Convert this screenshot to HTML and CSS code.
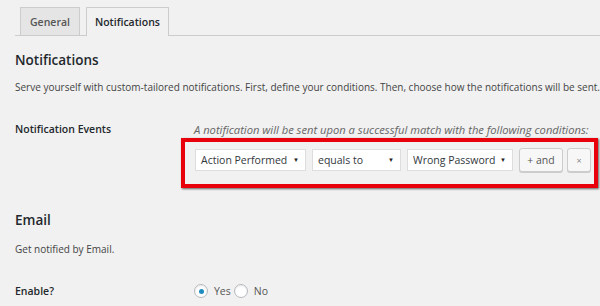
FILE: index.html
```html
<!DOCTYPE html>
<html>
<head>
	<meta charset="utf-8">
	<title>Notifications</title>
	<link rel="stylesheet" href="styles.css">
</head>
<body>
	<div class="wrap">
		<!-- tabs -->
		<nav class="tabs">
			<a class="tab">General</a>
			<a class="tab active">Notifications</a>
		</nav>

		<h2>Notifications</h2>
		<p class="desc">Serve yourself with custom-tailored notifications. First, define your conditions. Then, choose how the notifications will be sent.</p>

		<div class="row events">
			<div class="label">Notification Events</div>
			<div class="field">
				<p class="hint">A notification will be sent upon a successful match with the following conditions:</p>
				<div class="conditions">
					<div class="select w1">Action Performed <span class="arrow">&#9660;</span></div>
					<div class="select w2">equals to <span class="arrow">&#9660;</span></div>
					<div class="select w3">Wrong Password <span class="arrow">&#9660;</span></div>
					<button class="btn and">+ and</button>
					<button class="btn del">&times;</button>
				</div>
			</div>
		</div>

		<h2 class="email">Email</h2>
		<p class="desc small">Get notified by Email.</p>

		<div class="row enable">
			<div class="label">Enable?</div>
			<div class="field radios">
				<span class="radio checked"></span><span class="opt">Yes</span>
				<span class="radio"></span><span class="opt">No</span>
			</div>
		</div>
	</div>
</body>
</html>
```
FILE: styles.css
```css
* {
	margin: 0;
	padding: 0;
	box-sizing: border-box;
}
body {
	background: #f1f1f1;
	color: #23282d;
	font-family: "Open Sans", "Noto Sans", sans-serif;
	font-size: 10px;
	overflow: hidden;
}
.wrap {
	padding-left: 15px;
}

/* tabs */
.tabs {
	display: flex;
	gap: 6px;
	padding: 7px 0 0 5px;
	border-bottom: 1px solid #ccc;
}
.tab {
	display: block;
	height: 28px;
	line-height: 28px;
	padding: 0 9px;
	border: 1px solid #ccc;
	border-bottom: 0;
	background: #e5e5e5;
	color: #555;
	font-size: 10.5px;
	font-weight: 600;
	margin-bottom: -1px;
}
.tab.active {
	background: #f1f1f1;
	color: #23282d;
	height: 29px;
	padding: 0 8px;
}

h2 {
	font-size: 13.5px;
	font-weight: 600;
	line-height: 20px;
	margin-top: 14px;
}
.desc {
	margin-top: 9px;
	font-size: 10px;
	line-height: 16px;
	color: #444;
	white-space: nowrap;
}

.row {
	display: flex;
	line-height: 16px;
}
.label {
	width: 179px;
	font-weight: 600;
	font-size: 10.5px;
}
.events {
	margin-top: 26px;
}
.hint {
	font-style: italic;
	color: #666;
	font-size: 11.2px;
	margin-top: 1px;
	white-space: nowrap;
}

/* red highlight */
.conditions {
	display: flex;
	align-items: center;
	gap: 6px;
	width: 417px;
	height: 50px;
	margin: 0 0 0 -13px;
	padding: 0 0 6px 10px;
	border: 4px solid #e8000b;
	box-shadow: 1px 1px 2px rgba(0,0,0,.6);
}
.select {
	position: relative;
	height: 22px;
	line-height: 20px;
	padding-left: 5px;
	background: #fff;
	border: 1px solid #ddd;
	font-size: 10.5px;
	color: #32373c;
	white-space: nowrap;
	flex: none;
}
.select .arrow {
	position: absolute;
	right: 6px;
	top: 0;
	font-size: 6px;
	color: #222;
}
.w1 { width: 111px; }
.w2 { width: 89px; }
.w3 { width: 106px; }
.btn {
	height: 24px;
	background: #f7f7f7;
	border: 1px solid #ccc;
	border-radius: 3px;
	color: #555;
	font-family: inherit;
	box-shadow: 0 1px 0 #ccc;
	flex: none;
}
.btn.and {
	width: 44px;
	font-size: 10.5px;
}
.btn.del {
	width: 24px;
	margin-left: -2px;
	font-size: 9px;
	color: #888;
}

.email {
	margin-top: 22px;
}
.desc.small {
	margin-top: 11px;
}
.enable {
	margin-top: 26px;
	align-items: center;
}
.radios {
	display: flex;
	align-items: center;
	font-size: 10.5px;
	color: #555;
}
.radio {
	width: 14px;
	height: 14px;
	border: 1px solid #b4b9be;
	border-radius: 50%;
	background: #fff;
	box-shadow: inset 0 1px 2px rgba(0,0,0,.1);
	display: flex;
	align-items: center;
	justify-content: center;
}
.radio.checked::after {
	content: "";
	width: 5px;
	height: 5px;
	border-radius: 50%;
	background: #1e8cbe;
}
.opt {
	margin: 0 1px 0 6px;
}
.opt + .radio {
	margin-left: 2px;
}
```
